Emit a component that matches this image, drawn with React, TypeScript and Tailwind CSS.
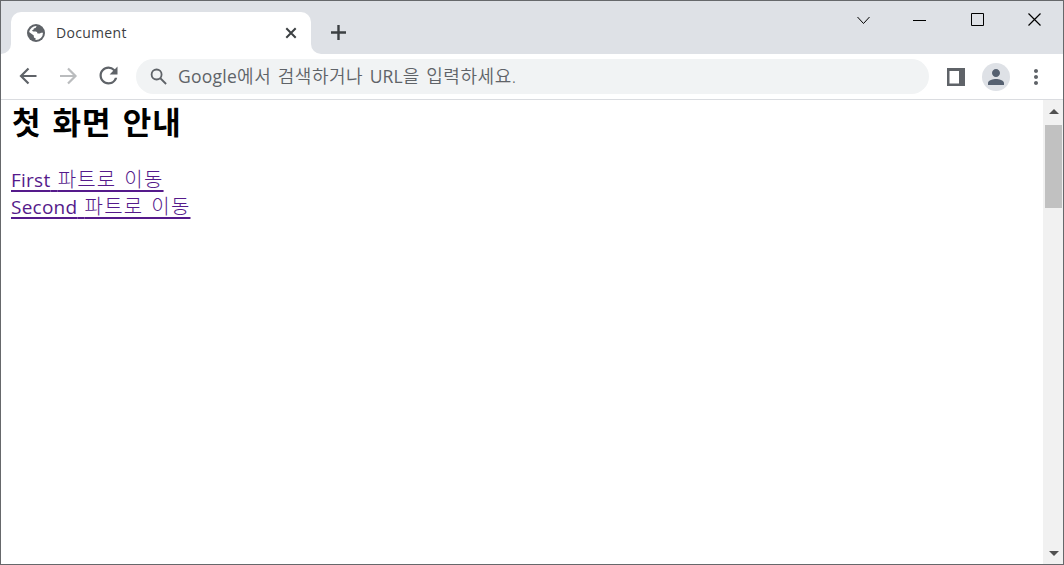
import { MdMoreVert, MdPerson, MdRefresh } from "react-icons/md";

const LINKS = [
  { href: "#first", part: "First", label: "파트로 이동" },
  { href: "#second", part: "Second", label: "파트로 이동" },
];

function GlobeIcon() {
  return (
    <svg width="18" height="18" viewBox="0 0 18 18" fill="none">
      <circle cx="9" cy="9" r="9" fill="#5f6368" />
      <path
        d="M9.600 2.100c-.5.6-.3 1.500-1.200 1.900-1 .4-1.600.2-1.700 1.100 0 .9-.7.9-1.500 1 .1.9.2 1.400 1.200 1.500h2.200c1.200 0 1.700.8 1.900 1.900h1.700c1 0 1.200-.8 2.100-.8h1.700a7.100 7.100 0 0 1-7.500 7.200v-2c-1 0-1.700-.5-1.700-1.500v-.9L2.100 8.100A7.100 7.100 0 0 1 9.600 2.100z"
        fill="#fff"
      />
    </svg>
  );
}

// Iconos de trazo simple (flechas, cerrar, nueva pestaña, lupa)
function StrokeIcon({ d, className }: { d: string; className: string }) {
  return (
    <svg viewBox="0 0 24 24" fill="none" stroke="currentColor" className={`size-6 ${className}`}>
      <path d={d} />
    </svg>
  );
}

function TabStrip() {
  return (
    <div className="flex h-[53px] bg-[#dee1e6]">
      <div className="w-[10px] bg-white">
        <div className="h-full rounded-br-[10px] bg-[#dee1e6]" />
      </div>
      <div className="pt-[10.5px]">
        <div className="flex h-[42.5px] w-[300px] items-center rounded-t-[10px] bg-white pl-4 pr-2">
          <GlobeIcon />
          <span className="ml-[11px] flex-1 font-['Open_Sans'] text-[14px] tracking-[0.3px] text-[#3c4043]">
            Document
          </span>
          <StrokeIcon d="m7.300 7.300 9.400 9.400M16.700 7.300l-9.400 9.400" className="stroke-2 text-[#3c4043]" />
        </div>
      </div>
      <div className="flex flex-1 bg-white">
        <div className="flex flex-1 justify-between rounded-bl-[10px] bg-[#dee1e6]">
          <StrokeIcon d="M12.500 5v15M5 12.500h15" className="ml-[15px] mt-[19px] stroke-[2.4] text-[#3c4043]" />
          <WindowButtons />
        </div>
      </div>
    </div>
  );
}

function WindowButtons() {
  return (
    <svg width="186" height="14" viewBox="0 0 186 14" fill="none" stroke="#000" className="mr-[21px] mt-3">
      <path d="m1.500 4 6 6.500 6-6.500M57 7.500h13M115.500.5h12v12h-12z" />
      <path d="M172.500.5l12 12M184.500.5l-12 12" strokeWidth="1.200" />
    </svg>
  );
}

function Toolbar() {
  return (
    <div className="flex h-[46px] items-center border-b border-[#dadce0] bg-white pl-[15px] text-[#5f6368]">
      <StrokeIcon d="M20.500 12H5.500M12.500 4.500 5 12l7.500 7.500" className="mb-0.5 stroke-[2.2]" />
      <StrokeIcon d="M4 12h15M12 4.500l7.500 7.500-7.500 7.500" className="mb-0.5 ml-4 stroke-[2.2] text-[#babcbe]" />
      <MdRefresh className="mb-0.5 ml-[15px] size-[27px]" />
      <div className="ml-[14px] flex h-[35px] w-[793px] items-center rounded-full bg-[#f1f3f4] pl-[11px]">
        <StrokeIcon
          d="M14.600 9.500a5 5 0 1 1-10 0a5 5 0 1 1 10 0M13.100 13l6 6"
          className="stroke-[1.8]"
        />
        <span className="ml-[7px] whitespace-nowrap font-['Open_Sans','Noto_Sans_CJK_KR',sans-serif] text-[18px] [word-spacing:1.200px]">
          <span className="text-[17.5px] tracking-[0.25px]">Google</span>
          <span className="font-[350] tracking-[0.55px]">에서 검색하거나 </span>
          <span className="text-[17.5px] tracking-[0.1px]">URL</span>
          <span className="font-[350] tracking-[0.55px]">을 입력하세요.</span>
        </span>
      </div>
      <svg width="18" height="18" viewBox="0 0 18 18" className="ml-[18px]">
        <path fillRule="evenodd" d="M0 0h18v18H0zM2.500 3v12.500H12V3z" fill="#5f6368" />
      </svg>
      <div className="ml-[17px] grid size-7 place-items-center rounded-full bg-[#dee1e6]">
        <MdPerson className="size-6 text-[#556070]" />
      </div>
      <MdMoreVert className="ml-[14px] size-6" />
    </div>
  );
}

function Scrollbar() {
  return (
    <div className="flex w-5 flex-col bg-[#f1f1f1] pl-0.5">
      <svg width="10" height="5" viewBox="0 0 10 5" className="ml-[4px] mt-[9px]">
        <path d="M5 0l5 5H0z" fill="#505050" />
      </svg>
      <div className="mt-[11px] h-[83px] w-[17px] bg-[#c1c1c1]" />
      <svg width="10" height="5" viewBox="0 0 10 5" className="mb-2 ml-[4px] mt-auto">
        <path d="M0 0h10L5 5z" fill="#505050" />
      </svg>
    </div>
  );
}

export default function App() {
  return (
    <div className="flex h-[565px] w-[1064px] flex-col border border-[#66686b] bg-white">
      <TabStrip />
      <Toolbar />
      <div className="flex min-h-0 flex-1">
        <main className="flex-1 pl-[10px] font-['Open_Sans','Noto_Sans_CJK_KR',sans-serif]">
          <h1 className="pl-px text-[31px] font-bold leading-[44px] tracking-[1px] text-black [word-spacing:2px]">
            첫 화면 안내
          </h1>
          <nav className="mt-[22px] flex flex-col items-start">
            {LINKS.map(({ href, part, label }) => (
              <a
                key={href}
                href={href}
                className="h-[27px] whitespace-nowrap text-[19px] leading-[27px] text-[#551a8b] underline decoration-2 underline-offset-[3px] [text-decoration-skip-ink:none]"
              >
                <span className="tracking-[0.25px] [word-spacing:2px]">{part} </span>
                <span className="text-[20px] font-light tracking-[1.2px] [word-spacing:1.5px]">{label}</span>
              </a>
            ))}
          </nav>
        </main>
        <Scrollbar />
      </div>
    </div>
  );
}
